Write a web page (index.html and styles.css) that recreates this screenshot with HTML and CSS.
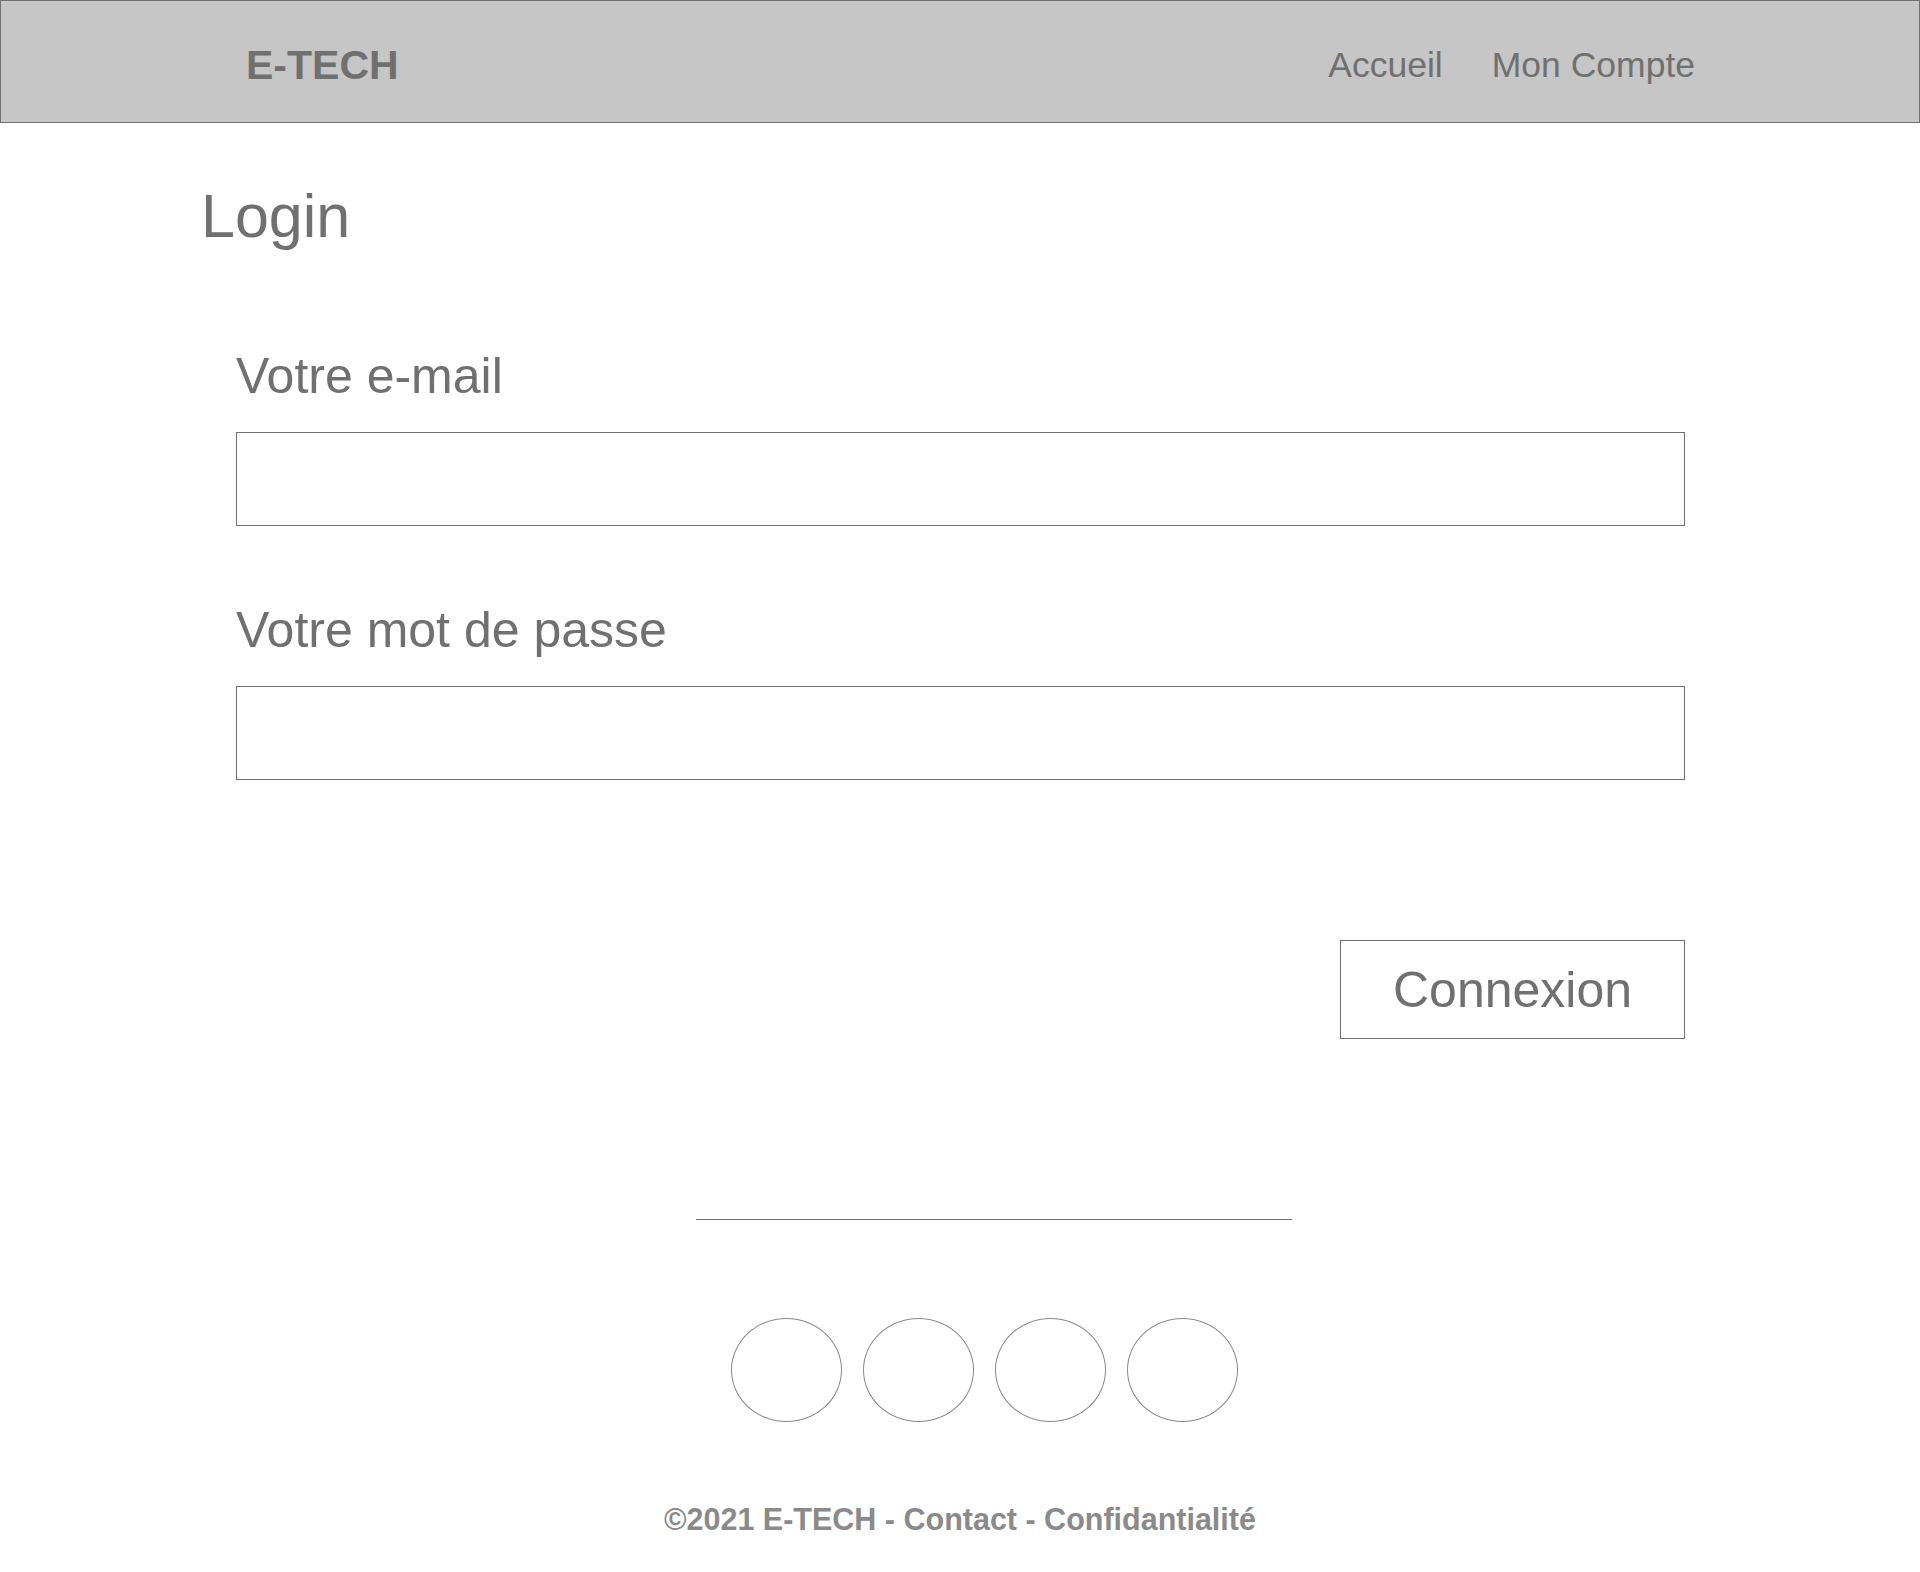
FILE: index.html
```html
<!DOCTYPE html>
<html lang="fr">
<head>
<meta charset="utf-8">
<title>E-TECH - Login</title>
<link rel="stylesheet" href="styles.css">
</head>
<body>
<header class="topbar">
  <div class="brand">E-TECH</div>
  <nav class="nav">
    <a class="nav-link" href="#">Accueil</a>
    <a class="nav-link" href="#">Mon Compte</a>
  </nav>
</header>
<main class="main">
  <h1 class="title">Login</h1>
  <form class="form">
    <label class="label label-first" for="email">Votre e-mail</label>
    <input class="field" id="email" type="email">
    <label class="label label-second" for="pass">Votre mot de passe</label>
    <input class="field" id="pass" type="password">
    <div class="actions">
      <button class="btn" type="button">Connexion</button>
    </div>
  </form>
</main>
<footer class="footer">
  <div class="divider-row"><div class="divider"></div></div>
  <div class="socials">
    <span class="social"></span>
    <span class="social"></span>
    <span class="social"></span>
    <span class="social"></span>
  </div>
  <p class="copy">©2021 E-TECH - Contact - Confidantialité</p>
</footer>
</body>
</html>
```

FILE: styles.css
```css
* { box-sizing: border-box; }
html, body { margin: 0; padding: 0; background: #ffffff; }
body {
  font-family: "Liberation Sans", Arial, Helvetica, sans-serif;
  color: #707070;
  width: 1920px;
}
.topbar {
  height: 123px;
  background: #c6c6c6;
  border: 1px solid #707070;
  display: flex;
  align-items: center;
  justify-content: space-between;
  padding: 7px 224px 0 245px;
}
.brand {
  font-size: 41px;
  line-height: 41px;
  font-weight: bold;
  color: #707070;
}
.nav { display: flex; gap: 49px; padding-top: 1px; }
.nav-link {
  font-size: 35.5px;
  line-height: 35px;
  color: #707070;
  text-decoration: none;
}
.main { padding-left: 201px; }
.title {
  margin: 63px 0 0 0;
  font-size: 61px;
  line-height: 61px;
  font-weight: normal;
}
.form {
  margin-left: 35px;
  width: 1449px;
  display: flex;
  flex-direction: column;
}
.label {
  display: block;
  font-size: 50px;
  line-height: 50px;
}
.label-first { margin-top: 104px; }
.label-second { margin-top: 79px; }
.field {
  margin: 31px 0 0 0;
  width: 1449px;
  height: 94px;
  border: 1px solid #707070;
  border-radius: 0;
  background: #ffffff;
  outline: none;
  padding: 0 20px;
  font: inherit;
  font-size: 30px;
}
.actions {
  display: flex;
  justify-content: flex-end;
  margin-top: 160px;
}
.btn {
  width: 345px;
  height: 99px;
  border: 1px solid #707070;
  border-radius: 0;
  background: #ffffff;
  color: #707070;
  font-family: "Liberation Sans", Arial, Helvetica, sans-serif;
  font-size: 50px;
  line-height: 50px;
  padding: 0;
}
.footer { padding-bottom: 20px; }
.divider-row { margin-top: 180px; padding-left: 696px; }
.divider { width: 596px; height: 1px; background: #707070; }
.socials {
  margin-top: 98px;
  padding-left: 731px;
  display: flex;
  gap: 21px;
}
.social {
  display: block;
  width: 111px;
  height: 104px;
  border: 1px solid #8a8a8a;
  border-radius: 50%;
}
.copy {
  margin: 82px 0 0 0;
  text-align: center;
  font-size: 30.5px;
  line-height: 30px;
  font-weight: bold;
  color: #8a8a8a;
}
```
